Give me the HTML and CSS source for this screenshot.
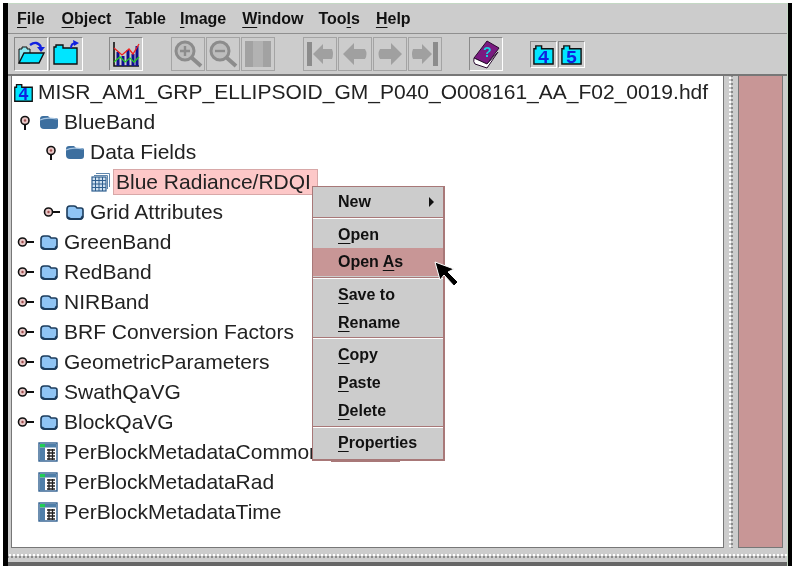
FILE: index.html
```html
<!doctype html>
<html>
	<head>
		<title>HDFView</title>
		<link rel="stylesheet" href="styles.css">
	</head>
	<body>
		<svg class="defs">
			<symbol id="closed" viewBox="0 0 20 16">
				<path d="M2 5 Q2 2 5 2 H9 Q11 2 12 4 H16 Q18 4 18 6 V12 Q18 15 15 15 H5 Q2 15 2 12 Z" fill="#8fc4f4" stroke="#1c3c5c" stroke-width="1.6"/>
				<path d="M3 13 Q4 15 6 15 H15 Q17 15 17.5 12" fill="none" stroke="#1c3c5c" stroke-width="2"/>
			</symbol>
			<symbol id="open" viewBox="0 0 20 16">
				<path d="M1 5 Q1 2 4 2 H9 L11 4 H17 Q19 4 19 6 V12 Q19 15 16 15 H5 Q1 15 1 11 Z" fill="#3d6f9f"/>
				<path d="M1 6 Q7 3 18 5" fill="none" stroke="#a9c6e2" stroke-width="1.2"/>
			</symbol>
			<symbol id="knob-open" viewBox="0 0 16 16">
				<path d="M8 10 V16" stroke="#111" stroke-width="2"/>
				<circle cx="8" cy="6.5" r="4" fill="#e8c8c8" stroke="#111" stroke-width="1.6"/>
				<circle cx="8" cy="6.5" r="1.2" fill="#a05050"/>
			</symbol>
			<symbol id="knob-closed" viewBox="0 0 18 16">
				<path d="M10 8 H18" stroke="#111" stroke-width="2"/>
				<circle cx="6.5" cy="8" r="4" fill="#e8c8c8" stroke="#111" stroke-width="1.6"/>
				<circle cx="6.5" cy="8" r="1.2" fill="#a05050"/>
			</symbol>
			<symbol id="table" viewBox="0 0 20 20">
				<rect x="1" y="1" width="18" height="18" fill="#fff" stroke="#2f5f8f" stroke-width="1.4"/>
				<rect x="2" y="2" width="5" height="3.5" fill="#22cc55"/>
				<rect x="7" y="2" width="11" height="3.5" fill="#4f7fa9"/>
				<rect x="2" y="5.5" width="5" height="13" fill="#4f7fa9"/>
				<path d="M9 8 H17 M9 11 H17 M9 14 H17 M9 17 H17 M11 7 V18 M14.5 7 V18" stroke="#222" stroke-width="1.3"/>
			</symbol>
			<symbol id="dataset" viewBox="0 0 20 20">
				<path d="M5 1.5 H18.5 V15 M3 3.5 H16.5 V17" fill="none" stroke="#5f87ad" stroke-width="1"/>
				<rect x="1" y="5" width="14" height="14" fill="#cfe0ef" stroke="#2f5f8f" stroke-width="1.2"/>
				<path d="M1 8.5 H15 M1 12 H15 M1 15.5 H15 M4.5 5 V19 M8 5 V19 M11.5 5 V19" stroke="#2f5f8f" stroke-width="1"/>
			</symbol>
			<symbol id="mini4" viewBox="0 0 24 24">
				<path d="M2 6 H4 V3 H10 V6 H22 V22 H2 Z" fill="#00e5ff" stroke="#111" stroke-width="1.5"/>
			</symbol>
			<symbol id="lens" viewBox="0 0 30 30">
				<circle cx="12" cy="12" r="9" fill="#bdbdbd" stroke="#8c8c8c" stroke-width="3"/>
				<path d="M19 19 L28 27" stroke="#8c8c8c" stroke-width="4"/>
			</symbol>
		</svg>
		<div class="page">
			<div class="edge-left"></div>
			<div class="window">
				<div class="menubar">
					<span class="menu m-file"><u>F</u>ile</span>
					<span class="menu m-object"><u>O</u>bject</span>
					<span class="menu m-table"><u>T</u>able</span>
					<span class="menu m-image"><u>I</u>mage</span>
					<span class="menu m-window"><u>W</u>indow</span>
					<span class="menu m-tools">Too<u>l</u>s</span>
					<span class="menu m-help"><u>H</u>elp</span>
				</div>
				<div class="toolbar">
					<div class="tool-group g-file">
						<button class="tool">
							<svg width="28" height="28" viewBox="0 0 28 28">
								<path d="M2 13 V9 H5 V7 H10 V9 H13 V23 H2 Z" fill="#8ce8f0" stroke="#111"/>
								<path d="M2 23 L7 13 H27 L22 23 Z" fill="#00e5ff" stroke="#111" stroke-width="1.4"/>
								<path d="M13 5 Q20 0 24 7" fill="none" stroke="#1020e0" stroke-width="2.4"/>
								<path d="M20 7 H28 L24 12 Z" fill="#1020e0"/>
							</svg>
						</button>
						<button class="tool">
							<svg width="28" height="28" viewBox="0 0 28 28">
								<path d="M2 10 V7 H4 V5 H11 V8 H25 V24 H2 Z" fill="#00e5ff" stroke="#111" stroke-width="1.4"/>
								<path d="M19 8 Q19 3 24 3" fill="none" stroke="#1020e0" stroke-width="2"/>
								<path d="M21 0 L27 3 L22 6 Z" fill="#1020e0"/>
							</svg>
						</button>
					</div>
					<div class="tool-group g-chart">
						<button class="tool">
							<svg width="28" height="28" viewBox="0 0 28 28">
								<path d="M2 2 V26 H27" fill="none" stroke="#111" stroke-width="1.6"/>
								<path d="M6 26 V12 M11 26 V16 M16 26 V10 M21 26 V14 M25 26 V6" stroke="#101090" stroke-width="3"/>
								<path d="M2 8 L10 15 L17 9 L21 14 L27 4" fill="none" stroke="#ee2222" stroke-width="1.3"/>
								<path d="M2 22 L8 17 L13 22 L18 18 L22 22 L27 17" fill="none" stroke="#22cc22" stroke-width="1.3"/>
							</svg>
						</button>
					</div>
					<div class="tool-group g-zoom">
						<button class="tool off">
							<svg width="30" height="30"><use href="#lens"/><path d="M7 12 H17 M12 7 V17" stroke="#8c8c8c" stroke-width="2.4"/></svg>
						</button>
						<button class="tool off">
							<svg width="30" height="30"><use href="#lens"/><path d="M7 12 H17" stroke="#8c8c8c" stroke-width="2.4"/></svg>
						</button>
						<button class="tool off">
							<svg width="26" height="26"><rect width="26" height="26" fill="#a2a2a2"/><rect x="8" width="10" height="26" fill="#b2b2b2"/></svg>
						</button>
					</div>
					<div class="tool-group g-nav">
						<button class="tool off">
							<svg width="30" height="30"><path d="M2 3 H7 V27 H2 Z" fill="#8c8c8c"/><path d="M8 15 L18 5 V10 H27 Q29 15 27 20 H18 V25 Z" fill="#a0a0a0"/></svg>
						</button>
						<button class="tool off">
							<svg width="30" height="30"><path d="M3 15 L14 4 V10 H25 Q28 15 25 20 H14 V26 Z" fill="#a0a0a0"/></svg>
						</button>
						<button class="tool off">
							<svg width="30" height="30"><path d="M27 15 L16 4 V10 H5 Q2 15 5 20 H16 V26 Z" fill="#a0a0a0"/></svg>
						</button>
						<button class="tool off">
							<svg width="30" height="30"><path d="M28 3 H23 V27 H28 Z" fill="#8c8c8c"/><path d="M22 15 L12 5 V10 H3 Q1 15 3 20 H12 V25 Z" fill="#a0a0a0"/></svg>
						</button>
					</div>
					<div class="tool-group g-help">
						<button class="tool">
							<svg width="30" height="30" viewBox="0 0 30 30">
								<path d="M3 19 L16 2 L28 9 L16 25 Z" fill="#7a1a80" stroke="#2a0a30"/>
								<path d="M3 19 Q2 23 4 25 L16 29 L27 13 L16 25 Z" fill="#fff" stroke="#2a0a30"/>
								<text x="12" y="18" class="book-mark">?</text>
							</svg>
						</button>
					</div>
					<div class="tool-group g-version">
						<button class="tool small">
							<svg class="ver" width="23" height="23" viewBox="0 0 24 24"><use href="#mini4"/><text x="12" y="21" class="ver-mark">4</text></svg>
						</button>
						<button class="tool small">
							<svg class="ver" width="23" height="23" viewBox="0 0 24 24"><use href="#mini4"/><text x="12" y="21" class="ver-mark">5</text></svg>
						</button>
					</div>
				</div>
				<div class="work">
					<div class="work-top">
						<div class="tree">
							<div class="row root"><svg class="root-icon ver" width="21" height="21" viewBox="0 0 24 24"><use href="#mini4"/><text x="12" y="21" class="ver-mark">4</text></svg><span class="label">MISR_AM1_GRP_ELLIPSOID_GM_P040_O008161_AA_F02_0019.hdf</span></div>
							<div class="row d0"><svg class="knob" width="18" height="16"><use href="#knob-open"/></svg><svg class="folder" width="20" height="16"><use href="#open"/></svg><span class="label">BlueBand</span></div>
							<div class="row d1"><svg class="knob" width="18" height="16"><use href="#knob-open"/></svg><svg class="folder" width="20" height="16"><use href="#open"/></svg><span class="label">Data Fields</span></div>
							<div class="row d2"><svg class="leaf" width="20" height="20"><use href="#dataset"/></svg><span class="label picked">Blue Radiance/RDQI</span></div>
							<div class="row d1"><svg class="knob" width="18" height="16"><use href="#knob-closed"/></svg><svg class="folder" width="20" height="16"><use href="#closed"/></svg><span class="label">Grid Attributes</span></div>
							<div class="row d0"><svg class="knob" width="18" height="16"><use href="#knob-closed"/></svg><svg class="folder" width="20" height="16"><use href="#closed"/></svg><span class="label">GreenBand</span></div>
							<div class="row d0"><svg class="knob" width="18" height="16"><use href="#knob-closed"/></svg><svg class="folder" width="20" height="16"><use href="#closed"/></svg><span class="label">RedBand</span></div>
							<div class="row d0"><svg class="knob" width="18" height="16"><use href="#knob-closed"/></svg><svg class="folder" width="20" height="16"><use href="#closed"/></svg><span class="label">NIRBand</span></div>
							<div class="row d0"><svg class="knob" width="18" height="16"><use href="#knob-closed"/></svg><svg class="folder" width="20" height="16"><use href="#closed"/></svg><span class="label">BRF Conversion Factors</span></div>
							<div class="row d0"><svg class="knob" width="18" height="16"><use href="#knob-closed"/></svg><svg class="folder" width="20" height="16"><use href="#closed"/></svg><span class="label">GeometricParameters</span></div>
							<div class="row d0"><svg class="knob" width="18" height="16"><use href="#knob-closed"/></svg><svg class="folder" width="20" height="16"><use href="#closed"/></svg><span class="label">SwathQaVG</span></div>
							<div class="row d0"><svg class="knob" width="18" height="16"><use href="#knob-closed"/></svg><svg class="folder" width="20" height="16"><use href="#closed"/></svg><span class="label">BlockQaVG</span></div>
							<div class="row leaf-row"><svg class="leaf" width="20" height="20"><use href="#table"/></svg><span class="label">PerBlockMetadataCommon</span></div>
							<div class="row leaf-row"><svg class="leaf" width="20" height="20"><use href="#table"/></svg><span class="label">PerBlockMetadataRad</span></div>
							<div class="row leaf-row"><svg class="leaf" width="20" height="20"><use href="#table"/></svg><span class="label">PerBlockMetadataTime</span></div>
						</div>
						<div class="split-v"></div>
						<div class="side"></div>
					</div>
					<div class="split-h"></div>
				</div>
				<div class="bottom-edge"></div>
			</div>
			<div class="edge-right"></div>
		</div>

		<div class="popup">
			<div class="pop-group"><div class="pop-item has-sub"><span>New</span><i class="arrow"></i></div></div>
			<div class="pop-group">
				<div class="pop-item"><span><u>O</u>pen</span></div>
				<div class="pop-item hot"><span>Open <u>A</u>s</span></div>
			</div>
			<div class="pop-group">
				<div class="pop-item"><span><u>S</u>ave to</span></div>
				<div class="pop-item"><span><u>R</u>ename</span></div>
			</div>
			<div class="pop-group">
				<div class="pop-item"><span><u>C</u>opy</span></div>
				<div class="pop-item"><span><u>P</u>aste</span></div>
				<div class="pop-item"><span><u>D</u>elete</span></div>
			</div>
			<div class="pop-group"><div class="pop-item"><span><u>P</u>roperties</span></div></div>
		</div>
		<div class="pop-shadow"></div>
		<svg class="cursor" width="26" height="28" viewBox="0 0 26 28">
			<path d="M2 1 L7 19 L11 14 L21 25 L25 21 L15 11 L21 8 Z" fill="#000" stroke="#fff" stroke-width="1"/>
		</svg>
	</body>
</html>
```
FILE: styles.css
```css
html, body {
	margin: 0;
	height: 100%;
	background-color: #fff;
	overflow: hidden;
}
body {
	filter: blur(0.35px);
}
.defs {
	display: none;
}
.page {
	display: flex;
	height: 566px;
	padding-left: 3px;
	padding-right: 4px;
}
.edge-left {
	width: 5px;
	margin-top: 3px;
	background-color: #000;
}
.edge-right {
	width: 4px;
	margin-top: 3px;
	background-color: #000;
}
.window {
	flex: 1;
	display: flex;
	flex-direction: column;
	margin-top: 3px;
	background-color: #ccc;
	border-top: 1px solid #c4d8c4;
	border-right: 1px solid #c4d8c4;
	font-family: "Liberation Sans", sans-serif;
}

/* menu bar */
.menubar {
	display: flex;
	height: 29px;
	align-items: center;
	border-bottom: 1px solid #8f8f8f;
	font-size: 16px;
	font-weight: bold;
	color: #111;
}
.menu u {
	text-underline-offset: 3px;
}
.m-file { margin-left: 9px; }
.m-object { margin-left: 17px; }
.m-table { margin-left: 14px; }
.m-image { margin-left: 14px; }
.m-window { margin-left: 16px; }
.m-tools { margin-left: 15px; }
.m-help { margin-left: 16px; }

/* tool bar */
.toolbar {
	display: flex;
	height: 42px;
	align-items: center;
	padding-left: 6px;
	box-sizing: border-box;
	border-bottom: 2px solid #777;
}
.tool-group {
	display: flex;
	gap: 1px;
}
.g-chart { margin-left: 26px; }
.g-zoom { margin-left: 28px; }
.g-nav { margin-left: 28px; }
.g-help { margin-left: 27px; }
.g-version { margin-left: 27px; }
.tool {
	display: flex;
	width: 34px;
	height: 34px;
	padding: 0;
	align-items: center;
	justify-content: center;
	box-sizing: border-box;
	background-color: #ccc;
	border: 1px solid;
	border-color: #8a8a8a #fff #fff #8a8a8a;
}
.tool.off {
	border-color: #a4a4a4;
}
.tool.small {
	width: 27px;
	height: 27px;
}
.book-mark {
	font: bold 14px "Liberation Sans", sans-serif;
	fill: #18d0e0;
}
.ver {
	overflow: visible;
}
.ver-mark {
	font: bold 20px "Liberation Mono", monospace;
	fill: #1020e0;
	text-anchor: middle;
}

/* tree and panes */
.work {
	flex: 1;
	display: flex;
	flex-direction: column;
}
.work-top {
	flex: 1;
	display: flex;
	padding-left: 3px;
}
.tree {
	width: 713px;
	padding-top: 1px;
	box-sizing: border-box;
	background-color: #fff;
	border-right: 1px solid #777;
	border-bottom: 1px solid #777;
	border-left: 1px solid #777;
	color: #222;
	font-size: 21px;
}
.row {
	display: flex;
	height: 30px;
	align-items: center;
	white-space: nowrap;
}
.root {
	padding-left: 1px;
}
.root-icon {
	margin-right: 4px;
}
.d0 { padding-left: 4px; }
.d1 { padding-left: 30px; }
.d2 { padding-left: 79px; }
.leaf-row { padding-left: 26px; }
.knob {
	margin-right: 5px;
}
.folder {
	margin-right: 5px;
}
.leaf {
	margin-right: 5px;
}
.leaf-row .leaf {
	margin-right: 6px;
}
.label {
	display: block;
}
.picked {
	width: 199px;
	margin-left: -3px;
	padding: 0 2px;
	background-color: #fdc8c8;
	border: 1px solid #d8a8a8;
}
.split-v {
	width: 14px;
	background-color: #ccc;
	background-image: radial-gradient(#fff 35%, transparent 40%), radial-gradient(#8a8a8a 35%, transparent 40%);
	background-size: 4px 4px;
	background-position: 4px 0, 6px 2px;
	background-repeat: repeat-y;
	border-right: 1px solid #777;
}
.side {
	width: 43px;
	background-color: #c89696;
	border-right: 1px solid #777;
	border-bottom: 1px solid #777;
}
.split-h {
	height: 14px;
	background-color: #ccc;
	background-image: radial-gradient(#fff 35%, transparent 40%), radial-gradient(#8a8a8a 35%, transparent 40%);
	background-size: 4px 4px;
	background-position: 0 5px, 2px 7px;
	background-repeat: repeat-x;
}
.bottom-edge {
	height: 4px;
	background-color: #666;
}

/* popup menu over the tree */
.popup {
	position: absolute;
	left: 312px;
	top: 186px;
	width: 133px;
	box-sizing: border-box;
	background-color: #ccc;
	border: 1px solid #a87878;
	border-right-width: 2px;
	border-bottom-width: 2px;
	font: bold 16px "Liberation Sans", sans-serif;
	color: #111;
}
.pop-group {
	border-bottom: 1px solid #a87878;
	box-shadow: 0 1px 0 #fff;
	margin-bottom: 2px;
	padding: 1px 0;
}
.pop-group:last-child {
	border-bottom: 0;
	box-shadow: none;
	margin-bottom: 0;
	padding-bottom: 2px;
}
.pop-item {
	display: flex;
	height: 27.7px;
	padding-left: 25px;
	align-items: center;
	justify-content: space-between;
}
.pop-item u {
	text-underline-offset: 3px;
}
.pop-item.hot {
	background-color: #c89696;
}
.arrow {
	margin-right: 9px;
	border-left: 5px solid #111;
	border-top: 5px solid transparent;
	border-bottom: 5px solid transparent;
}
.pop-shadow {
	position: absolute;
	left: 331px;
	top: 460px;
	width: 69px;
	height: 2px;
	background-color: #a87878;
}
.cursor {
	position: absolute;
	left: 433px;
	top: 261px;
}
```
